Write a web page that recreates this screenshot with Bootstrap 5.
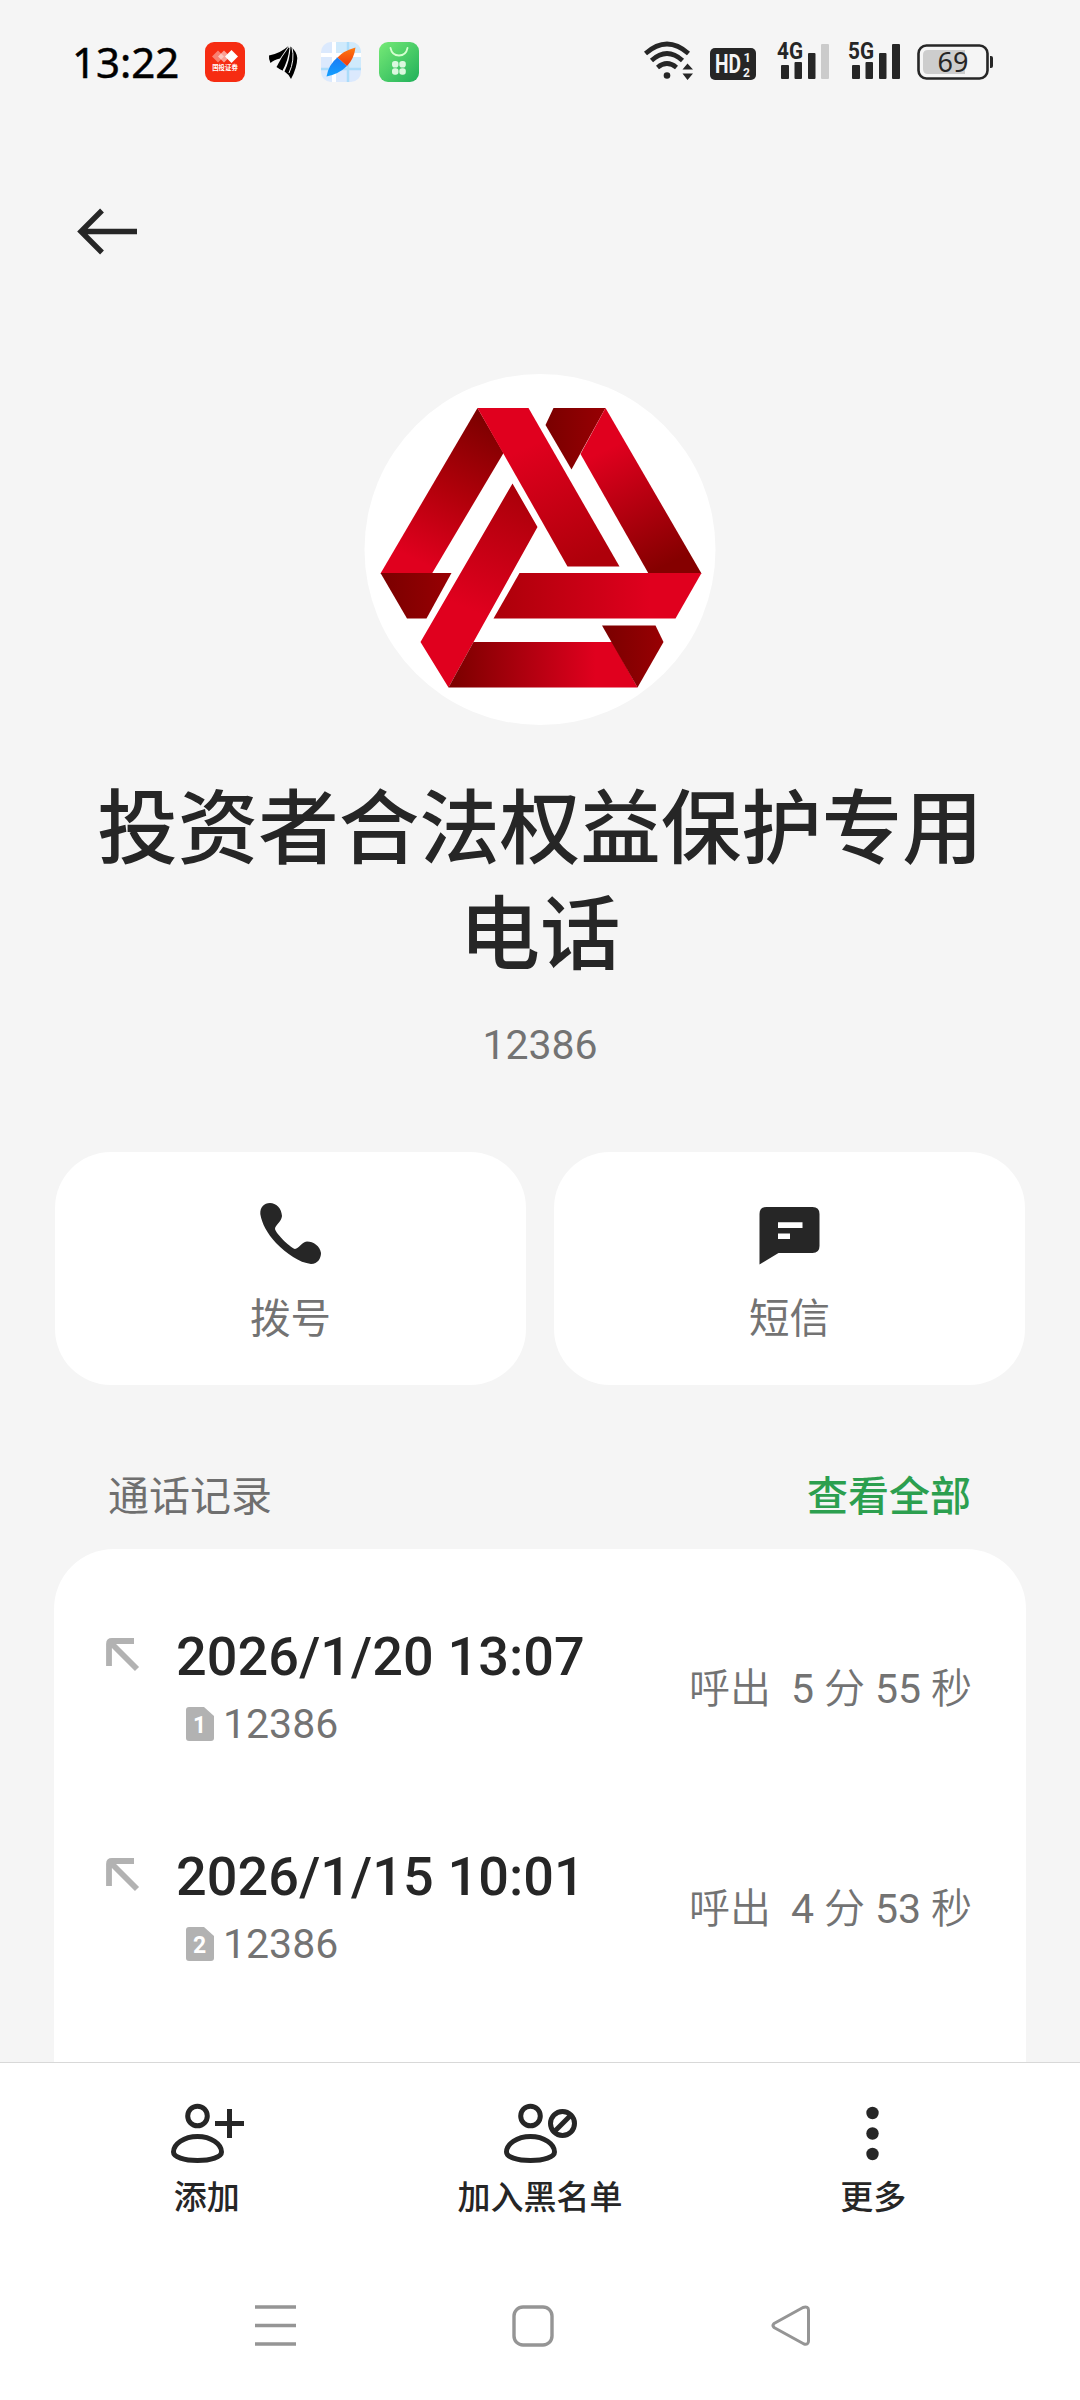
<!DOCTYPE html>
<html lang="zh-CN">
<head>
    <meta charset="UTF-8">
    <meta name="viewport" content="width=device-width, initial-scale=1.0">
    <title>联系人详情</title>
    <link href="https://cdn.jsdelivr.net/npm/bootstrap@5.3.0/dist/css/bootstrap.min.css" rel="stylesheet">
    <style>
        body { background: #f5f5f5; color: #262626; font-family: Roboto, "Noto Sans CJK SC", sans-serif; height: 2400px; overflow: hidden; line-height: 1.2; }
        svg { display: block; flex-shrink: 0; overflow: visible; }
        .screen { height: 2400px; }
        .status-bar { height: 124px; padding: 0 87px 0 72px; }
        .clock { font: 400 42px/42px "Noto Sans", sans-serif; color: #000; width: 133px; -webkit-text-stroke: .5px #000; }
        .app-icons { gap: 18px; }
        .top-bar { height: 216px; padding: 79px 0 0 72px; }
        .avatar { margin-top: 34px; width: 351px; height: 351px; }
        .contact-name { font-size: 80.5px; line-height: 106px; font-weight: 500; margin: 52px 80px 0; height: 212px; }
        .contact-num { font-size: 41px; line-height: 50px; color: #737373; margin-top: 31px; }
        .actions { margin: 82px 55px 0; gap: 28px; height: 233px; }
        .action { border-radius: 56px; color: #737373; font-size: 40.5px; line-height: 50px; padding-top: 51px; gap: 29px; flex: 1 1 0; }
        .section-head { margin: 87px 109px 0 108px; font-size: 41px; line-height: 50px; height: 77px; color: #6f6f6f; }
        .link-green { color: #2c9f4f; font-weight: 500; }
        .log-card { margin: 0 54px; border-radius: 60px 60px 0 0; padding-top: 49px; height: 513px; }
        .log-row { height: 220px; padding: 0 54px 0 52px; }
        .log-arrow { margin-top: 40px; }
        .log-main { margin-left: 36px; padding-top: 27px; flex-grow: 1; }
        .log-date { font-size: 54px; line-height: 64px; font-weight: 500; letter-spacing: .1px; }
        .log-num { font-size: 41px; line-height: 50px; color: #737373; padding-left: 10px; gap: 9px; margin-top: 10px; }
        .log-dur { font-size: 41px; line-height: 50px; color: #737373; margin-top: 66px; white-space: pre; font-weight: 350; }
        .tool-bar { border-top: 1px solid #d8d8d8; height: 177px; padding: 40px 40px 0; font-size: 33px; line-height: 40px; font-weight: 500; }
        .tool { width: 333.3px; gap: 13px; }
        .sys-nav { height: 161px; padding: 66px 268px 0 255px; }
    </style>
</head>
<body>
<div class="screen d-flex flex-column">
    <!-- Status bar -->
    <div class="status-bar d-flex align-items-center">
        <div class="clock">13:22</div>
        <div class="app-icons d-flex align-items-center">
            <svg width="40" height="40" viewBox="0 0 40 40">
                <rect width="40" height="40" rx="9" fill="#f62c12"/>
                <path d="M7 14.500l6-6 6 6-6 6z" fill="#fff" opacity=".4"/>
                <path d="M13 14.500l6-6 6 6-6 6z" fill="#fff" opacity=".55"/>
                <path d="M20 14.500l6.500-6.500 6.500 6.500-6.500 6.500z" fill="#fff"/>
                <text x="20" y="28.300" font-size="6.400" font-weight="700" text-anchor="middle" fill="#fff">国投证券</text>
            </svg>
            <svg width="40" height="40" viewBox="0 0 40 40">
                <path d="M6 13.500Q17 11.500 25.500 4Q21.500 10 17 16.500Q11 17.500 7.500 21Q5.500 17.500 6 13.500z"/>
                <path d="M26 5.500Q23.500 16 19.500 28.500L14.500 25Q20.500 15 26 5.500z"/>
                <path d="M25.500 5.500Q18 15.500 13.500 25Q17.500 28 19.500 28.500Q25 19 26.500 6z"/>
                <path d="M27.500 4.500Q33.500 9 34.300 16Q34 26 28 37Q25.500 32 21.500 29.500Q27 18 27.500 4.500z"/>
                <path d="M29 5.500Q32 18 26 31" fill="none" stroke="#f5f5f5" stroke-width="1"/>
            </svg>
            <svg width="40" height="40" viewBox="0 0 40 40">
                <defs>
                    <clipPath id="mapClip"><rect width="40" height="40" rx="10"/></clipPath>
                    <linearGradient id="needleB" x1="0" y1="0" x2="0" y2="1"><stop stop-color="#1a7bf5"/><stop offset="1" stop-color="#139fff"/></linearGradient>
                    <linearGradient id="needleR" x1="0" y1="0" x2="0" y2="1"><stop stop-color="#ff7a10"/><stop offset="1" stop-color="#f03a0a"/></linearGradient>
                </defs>
                <g clip-path="url(#mapClip)">
                    <rect width="40" height="40" fill="#dbe9fd"/>
                    <path d="M15 0h25v27H15z" fill="#cfeafc"/>
                    <path d="M0 13h40M13 0v40" stroke="#fff" stroke-width="4"/>
                    <path d="M0 27h40M27 0v40" stroke="#abdcfa" stroke-width="2.500"/>
                </g>
                <path d="M5.500 34.500Q8 22 16.500 15.500l9.500 8.500Q18 32 5.500 34.500z" fill="url(#needleB)"/>
                <path d="M34.500 5.500Q22 9 16.500 15.500l9.500 8.500Q33 17 34.500 5.500z" fill="url(#needleR)"/>
            </svg>
            <svg width="40" height="40" viewBox="0 0 40 40">
                <defs><linearGradient id="shopG" x1="0" y1="0" x2="1" y2="1"><stop stop-color="#76ea76"/><stop offset="1" stop-color="#20b05a"/></linearGradient></defs>
                <rect width="40" height="40" rx="9" fill="url(#shopG)"/>
                <path d="M11.500 6Q13 13.500 20 13.500T28.500 6" fill="none" stroke="#d5ffd0" stroke-width="1.800" stroke-linecap="round"/>
                <g fill="#dcf8df">
                    <rect x="13" y="19" width="6.500" height="6.500" rx="2.800"/><rect x="20.300" y="19" width="6.500" height="6.500" rx="2.800"/>
                    <rect x="13" y="26.300" width="6.500" height="6.500" rx="2.800"/><rect x="20.300" y="26.300" width="6.500" height="6.500" rx="2.800"/>
                </g>
            </svg>
        </div>
        <div class="d-flex ms-auto">
            <svg width="349" height="40" viewBox="644 42 349 40" fill="#262626">
                <!-- wifi -->
                <g fill="none" stroke="#262626" stroke-width="4.600">
                    <path d="M645.500 53.500Q667 34.500 688.500 53.500"/>
                    <path d="M651.500 60.500Q667 46.500 682.500 60.500"/>
                    <path d="M657.500 67.500Q667 59.500 676.500 67.500"/>
                </g>
                <circle cx="667" cy="75.500" r="3.300"/>
                <path d="M682.500 69.500l5-6 5.500 6zM682.500 73.500h10.500l-5.500 6.500z"/>
                <!-- volte -->
                <rect x="710" y="48" width="46" height="32" rx="5"/>
                <g fill="#f5f5f5" font-family="Roboto" font-weight="700">
                    <text x="715" y="73" font-size="25" textLength="26" lengthAdjust="spacingAndGlyphs">HD</text>
                    <text x="743.500" y="62" font-size="13">1</text>
                    <text x="743" y="76.500" font-size="12">2</text>
                </g>
                <!-- signal -->
                <text x="777" y="59" font-family="Roboto" font-size="23" font-weight="700" textLength="26" lengthAdjust="spacingAndGlyphs">4G</text>
                <rect x="781" y="65" width="8" height="14" rx="1"/><rect x="794.500" y="62" width="7.500" height="17" rx="1"/><rect x="808" y="53" width="7.500" height="26" rx="1"/><rect x="821" y="44" width="8" height="35" rx="1" fill="#cbcbcb"/>
                <text x="848" y="59" font-family="Roboto" font-size="23" font-weight="700" textLength="26" lengthAdjust="spacingAndGlyphs">5G</text>
                <rect x="852" y="65" width="8" height="14" rx="1"/><rect x="865.500" y="62" width="7.500" height="17" rx="1"/><rect x="879" y="53" width="7.500" height="26" rx="1"/><rect x="892" y="44" width="8" height="35" rx="1"/>
                <!-- battery -->
                <rect x="918.500" y="45.500" width="69" height="33" rx="8" fill="none" stroke="#262626" stroke-width="2.600"/>
                <path d="M928 50h37v24h-37q-5 0-5-5v-14q0-5 5-5z" fill="#cdcdcd"/>
                <path d="M990 56h1q2 0 2 2v8q0 2-2 2h-1z"/>
                <text x="953" y="71.500" font-family="Noto Sans" font-size="27" text-anchor="middle">69</text>
            </svg>
        </div>
    </div>

    <div class="top-bar">
        <svg width="72" height="56" viewBox="72 203 72 56">
            <path d="M137 231.500H81M102 210.500l-21 21 21 21" fill="none" stroke="#262626" stroke-width="5.400"/>
        </svg>
    </div>

    <!-- Contact header -->
    <div class="d-flex flex-column align-items-center">
        <svg class="avatar" viewBox="14.500 14 351 351">
            <defs>
                <linearGradient id="g1" gradientUnits="userSpaceOnUse" x1="135" y1="60" x2="65" y2="200"><stop stop-color="#7e0000"/><stop offset=".5" stop-color="#b0000a"/><stop offset="1" stop-color="#e0001e"/></linearGradient>
                <linearGradient id="g2" gradientUnits="userSpaceOnUse" x1="170" y1="90" x2="225" y2="207"><stop stop-color="#e0001e"/><stop offset="1" stop-color="#ae000a"/></linearGradient>
                <linearGradient id="g3" gradientUnits="userSpaceOnUse" x1="255" y1="90" x2="315" y2="213"><stop stop-color="#e0001e"/><stop offset=".95" stop-color="#850000"/></linearGradient>
                <linearGradient id="g4" gradientUnits="userSpaceOnUse" x1="170" y1="130" x2="120" y2="250"><stop stop-color="#aa0009"/><stop offset="1" stop-color="#e0001e"/></linearGradient>
                <linearGradient id="g5" gradientUnits="userSpaceOnUse" x1="150" y1="0" x2="300" y2="0"><stop stop-color="#ae000a"/><stop offset="1" stop-color="#e0001e"/></linearGradient>
                <linearGradient id="g6" gradientUnits="userSpaceOnUse" x1="105" y1="0" x2="245" y2="0"><stop stop-color="#7e0000"/><stop offset="1" stop-color="#e0001e"/></linearGradient>
                <linearGradient id="g7" x1="0" y1="0" x2="1" y2="0"><stop stop-color="#7a0000"/><stop offset="1" stop-color="#980003"/></linearGradient>
            </defs>
            <circle cx="189.500" cy="189.500" r="175.500" fill="#fff"/>
            <path d="M127 48L153 93 81.500 213.500H30z" fill="url(#g1)"/>
            <path d="M127 48h51L269 206.500h-52z" fill="url(#g2)"/>
            <path d="M203 48h52L221 109.500 195 65z" fill="url(#g7)"/>
            <path d="M255 48L351 213.500H298L230 94z" fill="url(#g3)"/>
            <path d="M30 213h71L76 258.500H56.500z" fill="url(#g7)"/>
            <path d="M162 123.500L187 167 123 282 98 327.500 70 282z" fill="url(#g4)"/>
            <path d="M169 213H351L325 258.500H143z" fill="url(#g5)"/>
            <path d="M123 282H262L287 327.500H98z" fill="url(#g6)"/>
            <path d="M251.500 265.500H305L313 282 287 327.500z" fill="url(#g7)"/>
        </svg>
        <h1 class="contact-name text-center">投资者合法权益保护专用<br>电话</h1>
        <div class="contact-num">12386</div>
    </div>

    <div class="actions d-flex">
        <div class="action bg-white d-flex flex-column align-items-center">
            <svg width="62" height="62" viewBox="260 1203 62 62" fill="#262626">
                <path d="M270 1203C264 1203 260 1207 260.300 1214C262 1224 267 1233 276 1243C287 1254 299 1262.500 311 1264C318 1264 321 1258 321 1253C320 1246 313.500 1241.500 307 1241.500C301 1242.500 299 1248.500 295 1249C292 1249 276 1234 275 1229C275 1225 281.500 1222 282 1216C281.500 1208 276 1203 270 1203z"/>
            </svg>
            <span>拨号</span>
        </div>
        <div class="action bg-white d-flex flex-column align-items-center">
            <svg width="60" height="62" viewBox="759.500 1203 60 62">
                <path d="M766 1207H812Q819 1207 819 1214V1246Q819 1253 812 1253H778L759 1264.500V1214Q759 1207 766 1207z" fill="#262626"/>
                <path d="M777.500 1222.300h24.500v5.700h-24.500zM777.500 1233.500h12v5.600h-12z" fill="#fff"/>
            </svg>
            <span>短信</span>
        </div>
    </div>

    <!-- Call log -->
    <div class="section-head d-flex justify-content-between">
        <span>通话记录</span>
        <span class="link-green">查看全部</span>
    </div>
    <div class="log-card bg-white">
        <div class="log-row d-flex">
            <svg class="log-arrow" width="34" height="34" viewBox="0 0 34 34"><path d="M3 28V6Q3 3 6 3H28M4.500 4.500L31 31" fill="none" stroke="#b2b2b2" stroke-width="5.800"/></svg>
            <div class="log-main">
                <div class="log-date">2026/1/20 13:07</div>
                <div class="log-num d-flex align-items-center">
                    <svg width="28" height="34" viewBox="0 0 28 34"><path d="M3 0H18L28 9V31Q28 34 25 34H3Q0 34 0 31V3Q0 0 3 0z" fill="#b2b2b2"/><text x="13.500" y="26" font-size="23" font-weight="700" text-anchor="middle" fill="#fff">1</text></svg>
                    <span>12386</span>
                </div>
            </div>
            <div class="log-dur">呼出  <span class="fw-normal">5</span> 分 <span class="fw-normal">55</span> 秒</div>
        </div>
        <div class="log-row d-flex">
            <svg class="log-arrow" width="34" height="34" viewBox="0 0 34 34"><path d="M3 28V6Q3 3 6 3H28M4.500 4.500L31 31" fill="none" stroke="#b2b2b2" stroke-width="5.800"/></svg>
            <div class="log-main">
                <div class="log-date">2026/1/15 10:01</div>
                <div class="log-num d-flex align-items-center">
                    <svg width="28" height="34" viewBox="0 0 28 34"><path d="M3 0H18L28 9V31Q28 34 25 34H3Q0 34 0 31V3Q0 0 3 0z" fill="#b2b2b2"/><text x="13.500" y="26" font-size="23" font-weight="700" text-anchor="middle" fill="#fff">2</text></svg>
                    <span>12386</span>
                </div>
            </div>
            <div class="log-dur">呼出  <span class="fw-normal">4</span> 分 <span class="fw-normal">53</span> 秒</div>
        </div>
    </div>

    <!-- Bottom toolbar -->
    <div class="tool-bar bg-white d-flex">
        <div class="tool d-flex flex-column align-items-center">
            <svg width="74" height="62" viewBox="170 2102 74 62" fill="none" stroke="#262626" stroke-width="5">
                <circle cx="197.500" cy="2115" r="9.800"/>
                <path d="M197.500 2135.500C184 2135.500 173.500 2143 173.500 2151C173.500 2156 184 2159.500 197.500 2159.500S221.500 2156 221.500 2151C221.500 2143 211 2135.500 197.500 2135.500z"/>
                <path d="M215 2122.500h29M229.500 2108v29"/>
            </svg>
            <span>添加</span>
        </div>
        <div class="tool d-flex flex-column align-items-center">
            <svg width="74" height="62" viewBox="170 2102 74 62" fill="none" stroke="#262626" stroke-width="5">
                <circle cx="197.500" cy="2115" r="9.800"/>
                <path d="M197.500 2135.500C184 2135.500 173.500 2143 173.500 2151C173.500 2156 184 2159.500 197.500 2159.500S221.500 2156 221.500 2151C221.500 2143 211 2135.500 197.500 2135.500z"/>
                <circle cx="229.500" cy="2122.500" r="12"/><path d="M221.500 2130.500l16-16"/>
            </svg>
            <span>加入黑名单</span>
        </div>
        <div class="tool d-flex flex-column align-items-center">
            <svg width="14" height="62" viewBox="866 2102 14 62" fill="#262626"><circle cx="872.500" cy="2112" r="6.200"/><circle cx="872.500" cy="2132.500" r="6.200"/><circle cx="872.500" cy="2153" r="6.200"/></svg>
            <span>更多</span>
        </div>
    </div>

    <!-- System navigation -->
    <div class="sys-nav bg-white d-flex justify-content-between">
        <svg width="41" height="42" viewBox="0 0 41 42"><path d="M0 2H41M0 20.500H41M0 39H41" stroke="#959595" stroke-width="3.600"/></svg>
        <svg width="42" height="42" viewBox="0 0 42 42"><rect x="2" y="2" width="38" height="38" rx="9" fill="none" stroke="#959595" stroke-width="3.400"/></svg>
        <svg width="42" height="42" viewBox="0 0 42 42"><path d="M4 18.500L33 2.500Q38.500 1 38.500 5V36Q38.500 40 34 39L4 22.500Q2 20.500 4 18.500z" fill="none" stroke="#959595" stroke-width="3" stroke-linejoin="round"/></svg>
    </div>
</div>
<script src="https://cdn.jsdelivr.net/npm/bootstrap@5.3.0/dist/js/bootstrap.bundle.min.js"></script>
</body>
</html>
